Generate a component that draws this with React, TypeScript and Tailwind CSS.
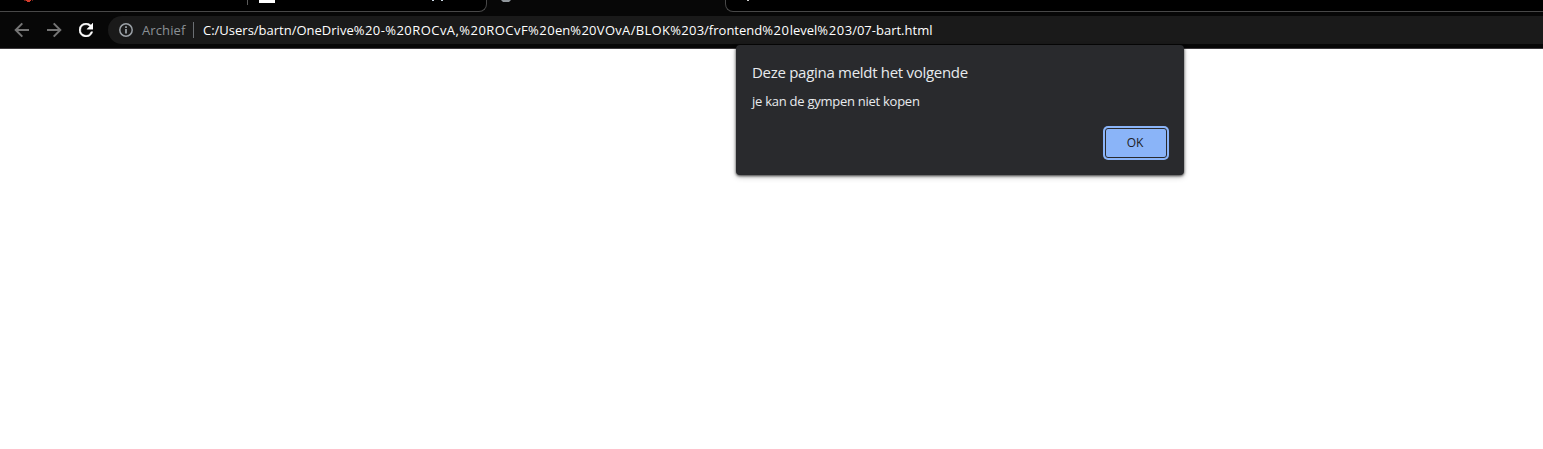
import React from "react";

function BackIcon({ flip = false }: { flip?: boolean }) {
  return (
    <svg viewBox="0 0 16 16" className={flip ? "h-4 w-4 rotate-180" : "h-4 w-4"} fill="none" stroke="#747474" strokeWidth="2">
      <path d="M15 8H2.5M8.3 1.4 1.7 8l6.6 6.6" />
    </svg>
  );
}

function ReloadIcon() {
  return (
    <svg viewBox="4 4 16 16" className="h-[14px] w-[14px]" fill="#ffffff">
      <path d="M17.65 6.35A7.95 7.95 0 0 0 12 4a8 8 0 1 0 7.73 10h-2.08A6 6 0 1 1 12 6c1.66 0 3.14.69 4.22 1.78L13 11h7V4z" stroke="#ffffff" strokeWidth="0.5" />
    </svg>
  );
}

function InfoIcon() {
  return (
    <svg viewBox="0 0 14 14" className="h-[14px] w-[14px]" fill="none" stroke="#9aa0a6">
      <circle cx="7" cy="7" r="6.2" strokeWidth="1.5" />
      <path d="M7 6v4.5M7 3.3v1.7" strokeWidth="1.8" />
    </svg>
  );
}

function TabStrip() {
  return (
    <div className="flex h-3 bg-[#070707]">
      <div className="flex h-3 w-[487px] items-start overflow-hidden rounded-br-[8px] border-r border-b border-[#484848] bg-black">
        <svg viewBox="0 0 10 2" className="ml-6 h-[2px] w-[10px]">
          <path d="M0 0h2v1H0zM8 0h1v1H8z" fill="#6e2018" />
          <path d="M2 0h5v1H6v1H3V1H2z" fill="#d63c2c" />
        </svg>
        <div className="ml-[213px] h-[5px] w-px bg-[#5a5a5a]" />
        <div className="ml-[11px] h-[3px] w-4 bg-white" />
        <svg viewBox="0 0 12 1" className="ml-[157px] h-px w-3" fill="#c8d4e0">
          <path d="M0 0h2v1H0zM9 0h2v1H9z" />
        </svg>
      </div>
      <div className="w-[238px] overflow-hidden">
        <svg viewBox="0 0 12 2" className="ml-[13px] h-[2px] w-3">
          <path d="M1 0h10L9 2H3z" fill="#90969b" />
        </svg>
      </div>
      <div className="h-3 flex-1 overflow-hidden rounded-bl-[8px] border-b border-l border-[#484848] bg-black">
        <div className="ml-[21px] h-px w-[2px] bg-[#cccccc]" />
      </div>
    </div>
  );
}

function Url() {
  return (
    <span className="ml-[9px] pt-px text-white">
      C:/Users/bartn/OneDrive
      <span className="tracking-[0.45px]">%20-%20ROCvA,%20ROCvF%20</span>en
      <span className="tracking-[0.3px]">%20VOvA/BLOK%20</span>3/frontend
      <span className="tracking-[0.6px]">%20</span>level
      <span className="tracking-[0.6px]">%20</span>3/07-bart.html
    </span>
  );
}

function Toolbar() {
  return (
    <div className="flex h-[37px] items-start border-b border-[#3c393c] bg-[#070707] pt-1">
      <div className="flex h-7 w-[108px] items-center pl-[14px]">
        <BackIcon />
        <div className="ml-4 flex"><BackIcon flip /></div>
        <div className="ml-[17px]"><ReloadIcon /></div>
      </div>
      <div className="flex h-7 flex-1 items-center rounded-l-full bg-[#1a1a1a] pl-[11px] font-['Open_Sans','Noto_Sans',sans-serif] text-[13px] whitespace-nowrap">
        <InfoIcon />
        <span className="ml-[9px] w-[51px] pt-px tracking-[0.1px] text-[#8a9095]">Archief</span>
        <span className="h-4 w-px bg-[#6b6f73]" />
        <Url />
      </div>
    </div>
  );
}

function AlertDialog() {
  return (
    <div role="alertdialog" className="absolute top-[45px] left-[736px] flex h-[130px] w-[448px] flex-col rounded-[4px] bg-[#292a2d] px-4 pt-4 font-['Open_Sans','Noto_Sans',sans-serif] text-[#e8eaed] shadow-[0_1px_3px_rgba(0,0,0,0.75),0_2px_6px_rgba(0,0,0,0.2)]">
      <h1 className="h-[22px] text-[15px] leading-[22px] tracking-[-0.29px] whitespace-nowrap">Deze pagina meldt het volgende</h1>
      <p className="mt-[8px] h-[20px] text-[13px] leading-5 tracking-[-0.26px] whitespace-nowrap">je kan de gympen niet kopen</p>
      <button className="mt-[17px] mr-px flex h-[30px] w-[62px] items-center justify-center self-end rounded-[3px] border border-[#292a2d] bg-[#8ab4f8] pr-[2px] text-[12px] text-[#202124] shadow-[0_0_0_2px_#8ab4f8]">
        OK
      </button>
    </div>
  );
}

export default function App() {
  return (
    <div className="relative h-[449px] w-[1543px] overflow-hidden bg-white">
      <TabStrip />
      <Toolbar />
      <AlertDialog />
    </div>
  );
}
